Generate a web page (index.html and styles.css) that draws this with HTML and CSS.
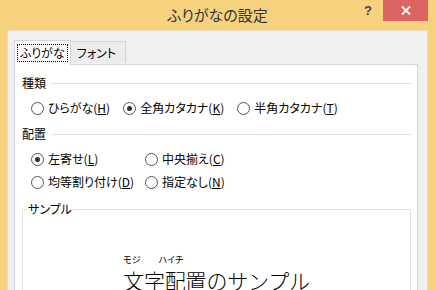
FILE: index.html
```html
<!DOCTYPE html>
<html>
<head>
  <meta charset="utf-8">
  <title>ふりがなの設定</title>
  <link rel="stylesheet" href="styles.css">
</head>
<body>
  <div class="window">
    <div class="titlebar">
      <span></span>
      <span class="title">ふりがなの設定</span>
      <div class="controls">
        <span class="help">?</span>
        <span class="close">
          <svg width="10" height="9" viewBox="0 0 10 9"><path d="M1 0.5 L9 8.5 M9 0.5 L1 8.5" stroke="#fff" stroke-width="1.8"/></svg>
        </span>
      </div>
    </div>

    <div class="client">
      <div class="tabs">
        <div class="tab active"><span class="focus">ふりがな</span></div>
        <div class="tab">フォント</div>
      </div>

      <div class="panel">
        <div class="group-title"><span>種類</span></div>
        <div class="radio-row">
          <label class="radio"><span class="circle"></span>ひらがな(<u>H</u>)</label>
          <label class="radio"><span class="circle checked"></span>全角カタカナ(<u>K</u>)</label>
          <label class="radio"><span class="circle"></span>半角カタカナ(<u>T</u>)</label>
        </div>

        <div class="group-title second"><span>配置</span></div>
        <div class="radio-grid">
          <label class="radio"><span class="circle checked"></span>左寄せ(<u>L</u>)</label>
          <label class="radio"><span class="circle"></span>中央揃え(<u>C</u>)</label>
          <label class="radio"><span class="circle"></span>均等割り付け(<u>D</u>)</label>
          <label class="radio"><span class="circle"></span>指定なし(<u>N</u>)</label>
        </div>

        <fieldset class="sample">
          <legend>サンプル</legend>
          <div class="sample-body">
            <div class="sample-block">
              <div class="ruby-line"><span>モジ</span><span class="ruby-2">ハイチ</span></div>
              <div class="sample-text">文字配置のサンプル</div>
            </div>
          </div>
        </fieldset>
      </div>
    </div>
  </div>
</body>
</html>
```

FILE: styles.css
```css
/* ダイアログ: ふりがなの設定 */
html, body {
  margin: 0;
  padding: 0;
  height: 100%;
  overflow: hidden;
}

body {
  background-color: #f6d27f;
  font-family: "Noto Sans CJK JP", "Noto Sans", sans-serif;
  font-size: 12px;
  color: #000;
  font-feature-settings: "palt";
}

.window {
  height: 100%;
  display: flex;
  flex-direction: column;
}

/* タイトルバー */
.titlebar {
  height: 30px;
  flex: none;
  display: grid;
  grid-template-columns: 1fr auto 1fr;
  align-items: start;
}

.title {
  padding-top: 5px;
  font-size: 15px;
  line-height: 20px;
  color: #333;
}

.controls {
  display: flex;
  justify-content: flex-end;
  padding-right: 7px;
}

.help {
  margin-top: 4px;
  margin-right: 11px;
  font-family: "Liberation Sans", Arial, sans-serif;
  font-weight: bold;
  font-size: 13px;
  line-height: 14px;
  color: #444;
}

.close {
  width: 45px;
  height: 21px;
  background-color: #dc6561;
  display: flex;
  align-items: center;
  justify-content: center;
}

/* クライアント領域 */
.client {
  flex: 1;
  min-height: 0;
  margin: 0 7px 0 7px;
  background-color: #f0f0f0;
  border: 1px solid #e9dcb9;
  border-bottom: none;
  padding: 8px 9px 0 6px;
  overflow: hidden;
}

.tabs {
  display: flex;
  align-items: flex-end;
  height: 25px;
  position: relative;
  z-index: 1;
}

.tab {
  height: 21px;
  padding: 0 9px 0 6px;
  border: 1px solid #d6d6d6;
  border-bottom: none;
  border-left: none;
  background-color: #ececec;
  line-height: 21px;
  margin-bottom: 1px;
}

.tab.active {
  height: 25px;
  padding: 3px 2px 0 2px;
  border-left: 1px solid #d6d6d6;
  background-color: #fff;
  margin-bottom: -1px;
  box-sizing: border-box;
}

.focus {
  display: block;
  padding: 0 2px;
  line-height: 16px;
  border: 1px dotted #000;
}

.panel {
  background-color: #fff;
  border: 1px solid #d6d6d6;
  padding: 10px 5px 0 7px;
  height: 300px;
}

.group-title {
  display: flex;
  align-items: center;
  line-height: 16px;
}

.group-title::after {
  content: "";
  flex: 1;
  height: 1px;
  margin-left: 5px;
  background-color: #e3e3e3;
}

.group-title.second {
  margin-top: 10px;
}

.radio-row {
  display: flex;
  gap: 13px;
  margin-top: 9px;
  padding-left: 9px;
}

.radio-grid {
  display: grid;
  grid-template-columns: 114px 114px;
  row-gap: 7px;
  margin-top: 9px;
  padding-left: 9px;
}

.radio {
  display: flex;
  align-items: center;
  line-height: 16px;
  white-space: nowrap;
}

.circle {
  width: 11px;
  height: 11px;
  border: 1px solid #555;
  border-radius: 50%;
  background-color: #fff;
  margin-right: 4px;
  display: flex;
  align-items: center;
  justify-content: center;
}

.circle.checked::after {
  content: "";
  width: 5px;
  height: 5px;
  border-radius: 50%;
  background-color: #333;
}

u {
  text-decoration-thickness: 1px;
  text-underline-offset: 1px;
}

/* サンプル */
.sample {
  margin: 12px 1px 0 0;
  padding: 0;
  border: 1px solid #e0e0e0;
  min-width: 0;
}

.sample legend {
  padding: 0;
  margin-left: 5px;
  line-height: 14px;
}

.sample-body {
  text-align: center;
  padding-top: 38px;
}

.sample-block {
  display: inline-block;
  text-align: left;
  font-feature-settings: normal;
}

.ruby-line {
  font-size: 9px;
  line-height: 12px;
  margin-bottom: 2px;
  font-feature-settings: "palt";
}

.ruby-2 {
  margin-left: 18px;
}

.sample-text {
  font-size: 21px;
  font-weight: 300;
  line-height: 24px;
  letter-spacing: -0.2px;
}
```
